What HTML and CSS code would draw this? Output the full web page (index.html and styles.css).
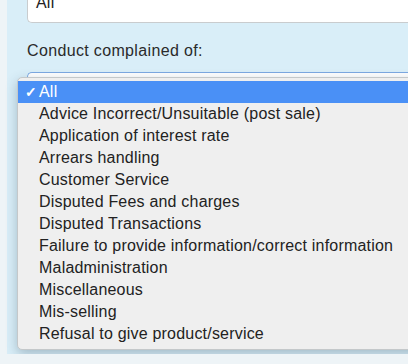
FILE: index.html
```html
<!DOCTYPE html>
<html lang="en">
<head>
    <meta charset="UTF-8">
    <title>Complaints filter</title>
    <link rel="stylesheet" href="styles.css">
</head>
<body>
    <div class="panel">
        <div class="field-top">
            <div class="input">All</div>
        </div>

        <label class="label">Conduct complained of:</label>
        <div class="select-wrap">
            <div class="select"></div>

            <ul class="menu">
                <li class="item selected"><span class="check">✓</span>All</li>
                <li class="item">Advice Incorrect/Unsuitable (post sale)</li>
                <li class="item">Application of interest rate</li>
                <li class="item">Arrears handling</li>
                <li class="item">Customer Service</li>
                <li class="item">Disputed Fees and charges</li>
                <li class="item">Disputed Transactions</li>
                <li class="item">Failure to provide information/correct information</li>
                <li class="item">Maladministration</li>
                <li class="item">Miscellaneous</li>
                <li class="item">Mis-selling</li>
                <li class="item">Refusal to give product/service</li>
            </ul>
        </div>
    </div>
</body>
</html>
```

FILE: styles.css
```css
body {
    margin: 0;
    background: #eef4f7;
    font-family: "Liberation Sans", Arial, sans-serif;
    color: #222;
    overflow: hidden;
}
.panel {
    margin-left: 7px;
    height: 364px;
    background: #d9eef8;
    padding-left: 20px;
}
.field-top {
    margin-top: -10px;
}
.input {
    height: 33px;
    box-sizing: border-box;
    background: #fff;
    border: 1px solid #c9ccce;
    border-right: none;
    border-radius: 5px 0 0 5px;
    padding: 3px 8px;
    font-size: 16px;
    letter-spacing: 0.2px;
}
.label {
    display: block;
    margin-top: 19px;
    font-size: 16px;
    line-height: 18px;
    letter-spacing: 0.35px;
    color: #2a2a2a;
}
.select-wrap {
    position: relative;
    margin-top: 12px;
}
.select {
    height: 30px;
    background: #fff;
    border: 1px solid #7da9e2;
    border-right: none;
    border-radius: 5px 0 0 5px;
}
.menu {
    position: absolute;
    left: -10px;
    top: 5px;
    width: 420px;
    margin: 0;
    padding: 3px 0 4px;
    list-style: none;
    background: #efefef;
    border: 1px solid #c4c8ca;
    border-radius: 5px;
    box-shadow: 0 4px 12px rgba(40, 70, 90, 0.3);
}
.item {
    position: relative;
    height: 22px;
    line-height: 22px;
    padding-left: 21px;
    font-size: 16px;
    letter-spacing: 0.2px;
    color: #222;
    white-space: nowrap;
}
.item.selected {
    background: #4a90f6;
    color: #fff;
}
.check {
    position: absolute;
    left: 7px;
    font-size: 14px;
    font-weight: bold;
}
```
